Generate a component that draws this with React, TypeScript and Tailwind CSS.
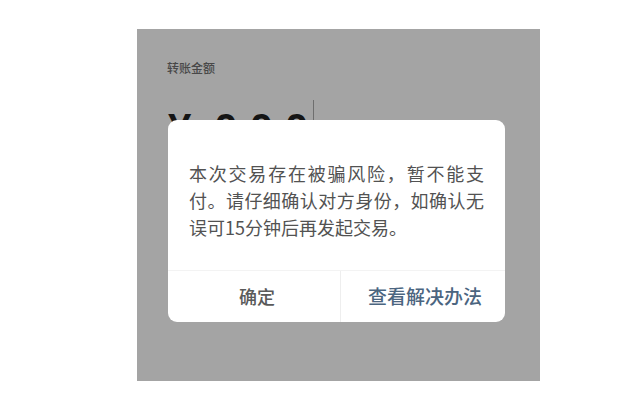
const cjk = { fontFamily: '"Noto Sans CJK SC", "Noto Sans", sans-serif' };
const latin = { fontFamily: '"Liberation Sans", Arial, sans-serif' };

export default function App() {
  return (
    <div className="w-[640px] h-[405px] bg-white overflow-hidden" style={cjk}>
      <div className="relative ml-[137px] mt-[29px] w-[403px] h-[352px] bg-[#a4a4a4]">
        <div className="pl-[30px] pt-[31px]">
          <p className="text-[12px] leading-[16px] font-medium text-[#484848]">转账金额</p>
          <div className="mt-[32px] flex items-start text-[42px] leading-[42px] font-bold text-[#151515]" style={latin}>
            <span className="pl-px">¥</span>
            <span className="ml-[23px]">0</span>
            <span className="ml-[12px]">0</span>
            <span className="ml-[12px]">0</span>
            <span className="ml-[5px] mt-[-8px] w-px h-[40px] bg-[#6e6e6e]" />
          </div>
        </div>

        <div className="absolute left-[31px] top-[91px] w-[337px] h-[202px] bg-white rounded-[9px] flex flex-col">
          <div className="pt-[40px] px-[21px] text-[18px] leading-[27px] text-[#525252]">
            <div className="text-justify [text-align-last:justify]">本次交易存在被骗风险，暂不能支</div>
            <div className="text-justify [text-align-last:justify]">付。请仔细确认对方身份，如确认无</div>
            <div>误可15分钟后再发起交易。</div>
          </div>
          <div className="mt-auto h-[52px] border-t border-[#f3f3f3] flex">
            <button className="w-[172px] flex items-center justify-center text-[18px] font-medium text-[#5a5a5a] pl-[6px]">
              确定
            </button>
            <div className="w-px bg-[#eeeeee]" />
            <button className="flex-1 flex items-center justify-center text-[19px] font-medium text-[#4b6580] pl-[4px]">
              查看解决办法
            </button>
          </div>
        </div>
      </div>
    </div>
  );
}
